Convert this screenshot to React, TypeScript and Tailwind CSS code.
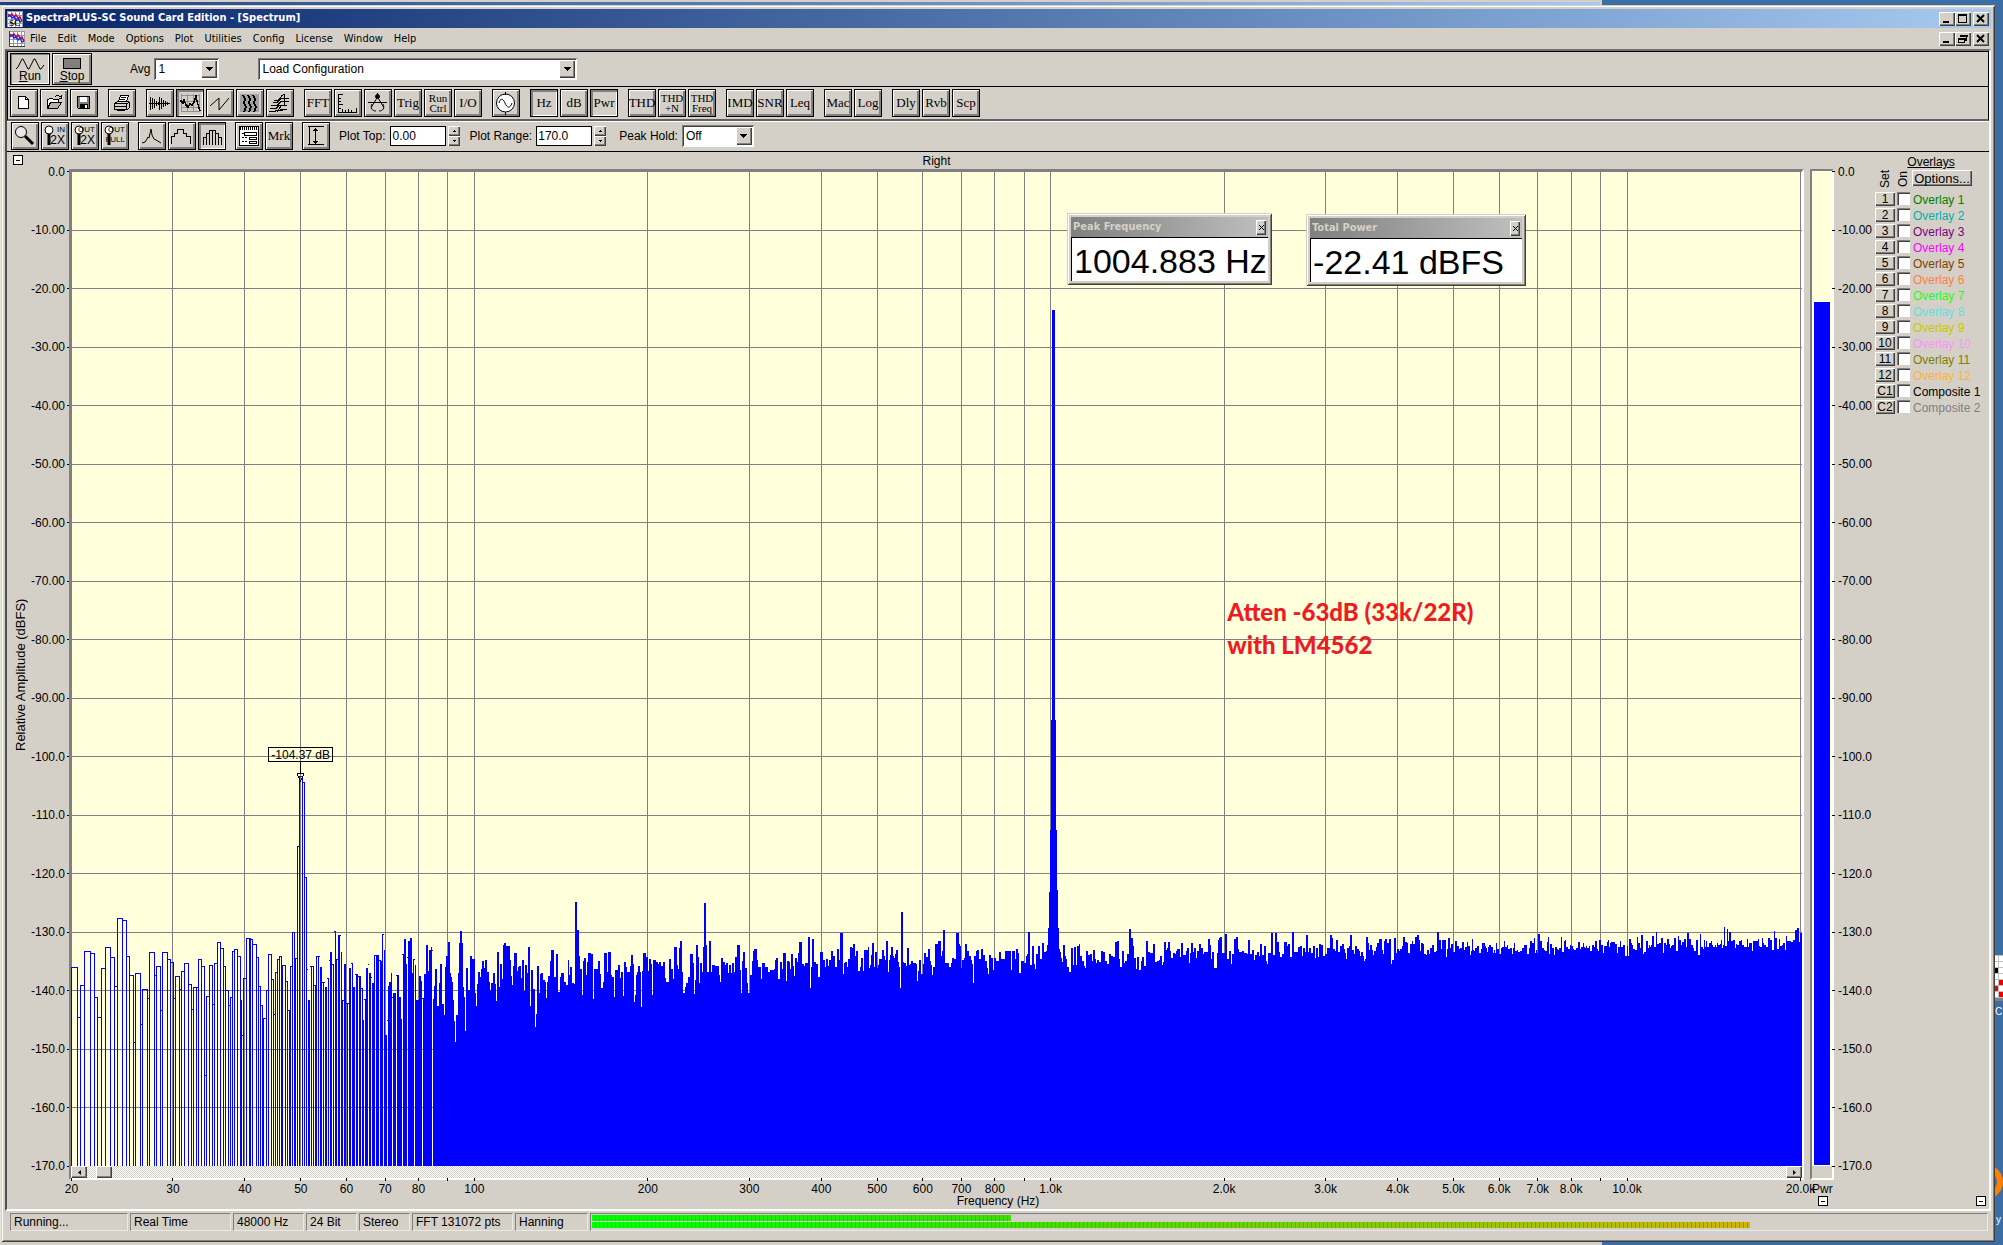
import React from "react";

const RAISED =
  "bg-[#d4d0c8] shadow-[inset_1px_1px_#ffffff,inset_-1px_-1px_#404040,inset_-2px_-2px_#808080]";
const SUNKEN =
  "shadow-[inset_1px_1px_#808080,inset_-1px_-1px_#ffffff,inset_2px_2px_#404040]";
const TAHOMA = "font-['Tahoma','DejaVu_Sans_Condensed','DejaVu_Sans',sans-serif]";

/* ---------- spectrum data ---------- */

const PLOT_W = 1731;
const PLOT_H = 995;
const DECADE = 576.34;
const BIN_HZ = 48000 / 131072;
const xOf = (hz: number) => 0.5 + DECADE * Math.log10(hz / 20);

// Step traces: pairs of (start, level) on a fine raster.
const LOW = [
  214,712,230,862,241,766,253,664,269,670,281,802,292,862,304,715,316,652,330,682,341,769,352,565,365,571,377,679,387,736,398,937,406,730,419,883,427,778,440,805,448,667,461,736,469,709,479,841,487,667,500,688,509,697,518,805,526,739,536,778,544,724,553,700,563,763,572,838,578,772,587,772,595,688,604,709,611,1036,619,799,628,706,635,823,643,700,652,637,659,655,668,709,674,781,683,826,689,802,697,664,703,658,710,679,719,811,724,916,730,745,739,625,746,625,751,628,757,643,767,682,773,769,779,826,785,886,790,865,799,781,805,673,812,748,818,853,824,727,830,688,836,679,842,724,847,706,854,754,860,841,866,931,871,709,877,607,881,769,886,685,892,349,898,139,905,157,911,442,919,718,925,811,931,709,941,766,947,679,953,679,960,712,967,757,974,772,982,745,988,691,991,667,997,703,1003,604,1009,688,1015,616,1023,667,1026,811,1032,703,1038,820,1047,715,1054,700,1060,772,1066,733,1074,739,1082,775,1088,871,1093,808,1098,715,1103,703,1108,730,1113,742,1117,760,1123,676,1129,676,1137,691,1143,694,1147,613,1152,660,1155,915,1160,871,1163,769,1167,757,1172,730,1176,802,1180,790,1189,736,1197,802,1203,868,1207,673,1211,628,1217,703,1222,682,1225,634,1229,625,1235,730,1240,688,1245,706,1249,811,1258,739,1262,754,1266,805,1273,733,1279,646,1284,724,1288,661,1293,652,1297,661,1300,808,1303,769,1306,718,1310,829,1317,760,1321,703,1325,823,1331,856,1335,712,1339,679,1345,637,
];
const MID = [
  0,222,6,342,11,375,14,231,17,198,22,156,28,249,31,261,34,276,37,330,40,393,43,456,46,375,51,249,54,159,57,123,61,159,64,291,67,321,70,423,73,234,78,300,84,198,90,207,98,309,101,348,104,282,107,246,112,261,115,237,118,213,123,234,126,210,132,246,137,276,140,300,143,279,148,249,154,282,157,333,160,186,165,291,168,222,174,267,177,165,180,159,185,168,196,210,199,258,202,285,205,228,208,189,215,243,218,231,221,228,227,264,230,210,235,303,238,225,244,249,247,171,252,348,255,240,260,297,266,411,269,372,272,228,277,309,280,252,283,249,289,270,294,276,297,324,300,276,303,258,308,213,311,180,318,261,325,192,330,306,336,261,339,249,347,276,354,285,357,210,361,255,364,231,370,279,375,282,378,36,384,120,389,198,392,237,398,315,401,213,404,204,409,255,412,216,415,189,422,192,428,327,431,237,441,213,448,252,451,294,455,276,460,189,468,246,471,186,479,255,482,261,487,321,490,240,497,225,504,264,507,246,512,318,515,216,521,231,524,246,532,228,536,195,540,222,543,336,546,315,549,255,552,246,555,228,560,246,563,351,566,243,569,189,577,201,582,243,585,207,591,222,594,315,597,210,605,216,611,222,614,216,620,228,625,216,630,264,633,276,641,207,647,237,652,267,655,171,664,225,667,237,670,174,673,153,678,246,681,309,687,291,690,279,695,261,701,192,708,219,711,312,714,270,717,165,722,201,725,279,728,219,734,246,737,171,740,39,745,165,748,246,753,153,759,246,762,225,770,228,781,255,784,276,787,204,793,216,798,225,801,219,806,249,809,225,815,249,818,219,823,246,826,201,832,165,840,240,843,309,846,213,849,186,854,234,859,279,862,309,868,255,874,213,877,183,880,177,888,210,891,231,899,267,902,219,910,231,918,246,924,240,936,237,939,210,942,204,947,267,953,216,958,237,961,189,969,273,972,213,978,216,981,237,984,192,988,228,991,258,994,204,1000,216,1003,189,1006,156,1014,222,1020,228,1023,219,1030,141,1036,294,1039,231,1042,147,1047,216,1053,222,1058,261,1064,186,1072,210,1078,231,1081,207,1087,228,1090,210,1096,183,1101,198,1106,231,1112,177,1117,210,1120,129,1128,252,1131,219,1134,216,1140,231,1143,207,1149,171,1154,174,1157,162,1162,198,1165,183,1170,243,1176,231,1179,204,1184,243,1187,180,1197,171,1201,234,1204,225,1207,195,1210,159,1215,231,1218,186,1223,234,1226,225,1229,207,1238,180,1243,198,1246,210,1249,153,1254,246,1257,210,1260,195,1263,171,1268,198,1271,204,1275,192,1278,180,1281,216,1285,231,1288,294,1291,66,1296,216,1300,219,1305,228,1308,174,1313,225,1316,222,1320,213,1325,219,1334,222,1336,273,1339,243,1342,210,1347,252,1353,222,1356,189,1361,201,1367,177,1372,213,1375,225,1378,255,1381,231,1387,162,1394,153,1402,198,1405,183,1408,120,1413,219,1424,231,1431,219,1434,204,1438,207,1445,129,1453,162,1455,168,
];
const HIGH = [
  0,198,3,264,6,240,12,234,15,192,21,213,27,228,33,240,36,252,39,309,42,228,48,213,51,210,57,237,63,207,69,225,75,243,81,264,84,282,87,225,93,234,99,270,102,234,108,243,117,216,123,237,135,213,153,270,156,213,165,237,168,207,174,219,177,279,183,243,192,249,198,228,201,222,204,156,210,255,216,198,222,252,225,267,228,222,234,198,240,237,246,189,252,216,258,213,261,195,264,144,267,36,270,-150,273,-480,276,-1710,285,-480,288,-150,291,30,294,144,297,207,300,216,303,234,306,246,309,195,315,228,318,237,321,261,327,276,333,204,339,255,342,201,348,255,351,198,357,192,360,228,366,243,372,258,375,264,378,213,384,225,390,222,396,243,399,210,405,237,408,249,411,240,417,246,423,213,429,216,435,243,441,252,447,222,453,228,459,231,465,186,471,183,477,237,480,261,486,213,492,249,495,243,501,222,507,147,513,174,519,198,522,234,528,267,531,231,537,270,543,243,546,231,552,258,558,183,564,216,570,219,579,192,585,246,591,243,597,240,600,228,606,255,609,246,612,186,618,210,621,204,624,186,630,213,633,234,639,219,645,222,648,213,651,207,660,231,663,189,669,225,678,213,681,204,687,249,690,219,693,189,699,216,702,204,708,234,711,213,717,192,723,204,729,222,732,216,744,177,750,195,753,237,756,216,762,264,771,219,774,180,777,174,780,171,786,219,795,162,801,237,807,213,813,252,816,222,822,177,828,171,834,207,837,216,846,213,852,219,861,222,864,180,870,222,876,210,882,240,885,225,891,216,897,228,900,192,906,225,912,198,918,243,921,252,924,219,933,159,939,225,945,159,951,186,957,216,960,231,966,222,972,186,981,198,984,192,990,231,996,156,1002,216,1014,201,1020,198,1026,228,1029,204,1035,216,1038,165,1044,216,1047,204,1053,219,1059,198,1065,234,1068,204,1074,231,1077,192,1083,195,1089,228,1095,222,1101,204,1110,165,1116,174,1119,207,1125,213,1128,180,1134,216,1140,198,1146,192,1152,207,1155,219,1158,237,1161,204,1167,198,1170,165,1176,210,1182,222,1185,198,1191,207,1197,213,1200,228,1203,216,1209,228,1212,243,1215,237,1218,171,1224,189,1227,210,1230,195,1236,210,1239,225,1242,213,1248,201,1251,189,1257,177,1266,210,1269,222,1272,183,1275,177,1281,189,1287,177,1293,252,1296,240,1302,174,1308,219,1311,207,1317,213,1320,207,1326,198,1329,171,1335,186,1341,189,1344,219,1350,192,1356,183,1359,192,1365,171,1371,165,1377,180,1380,213,1383,189,1389,192,1392,222,1398,225,1401,210,1407,222,1410,204,1416,195,1422,216,1428,213,1431,156,1437,180,1443,207,1446,180,1458,231,1461,207,1464,174,1470,204,1473,192,1479,216,1485,183,1491,198,1497,207,
];

const OUTLINE_END = 235;

function buildSpectrum() {
  const top: number[] = new Array(PLOT_W).fill(780);
  const fill = (d: number[], scale: number, ox: number, oy: number, end: number) => {
    for (let i = 0; i < d.length; i += 2) {
      const a = Math.round(d[i] / scale) + ox;
      const b = i + 2 < d.length ? Math.round(d[i + 2] / scale) + ox : end;
      for (let x = Math.max(0, a); x < b; x++) top[x] = Math.round(d[i + 1] / 3) + oy;
    }
  };
  fill(LOW, 3, -71, 559, 378);
  fill(MID, 2.8, 369, 719, 889);
  fill(HIGH, 3, 889, 709, 1389);
  let seed = 4562;
  const rnd = () => {
    seed = (seed * 1103515245 + 12345) % 2147483648;
    return seed / 2147483648;
  };
  let x = 1389;
  while (x < PLOT_W) {
    const base = 778 - (7 * (x - 1389)) / 341;
    const spike = rnd();
    const y = base + (rnd() + rnd() - 1) * 10 - (spike > 0.91 ? 8 : 0) + (spike < 0.05 ? 6 : 0);
    const w = rnd() > 0.5 ? 2 : 1;
    for (let k = 0; k < w && x < PLOT_W; k++, x++) top[x] = Math.round(y);
  }

  let outline = "";
  for (let i = 0; i + 2 < LOW.length; i += 2) {
    const a = Math.round(LOW[i] / 3) - 71;
    const b = Math.round(LOW[i + 2] / 3) - 71;
    if (b > OUTLINE_END) break;
    const y = Math.round(LOW[i + 1] / 3) + 559;
    outline += `M${a + 0.5} ${PLOT_H}V${y + 0.5}H${b + 0.5}V${PLOT_H}`;
  }

  const edges = new Set<number>();
  for (let k = 50; k < 260; k++) edges.add(Math.round(xOf((k + 0.5) * BIN_HZ) - 0.5));
  let solid = "";
  for (let c = OUTLINE_END; c < PLOT_W; c++) {
    const filled = c > 368 || edges.has(c);
    solid += filled ? `M${c} ${PLOT_H}V${top[c]}h1V${PLOT_H}z` : `M${c} ${top[c]}h1v1h-1z`;
  }
  return { outline, solid };
}

const SPECTRUM = buildSpectrum();
const DB_LABELS = Array.from({ length: 18 }, (_, i) =>
  i === 0 ? "0.0" : i < 10 ? `-${i * 10}.00` : `-${i * 10}.0`
);
const GRID_HZ = [
  20, 30, 40, 50, 60, 70, 80, 90, 100, 200, 300, 400, 500, 600, 700, 800, 900, 1000, 2000, 3000,
  4000, 5000, 6000, 7000, 8000, 9000, 10000, 20000,
];
const hzLabel = (f: number) =>
  String(f)[0] === "9" ? "" : f >= 1000 ? `${(f / 1000).toFixed(1)}k` : String(f);

/* ---------- small parts ---------- */

function ToolButton({
  label,
  pressed,
  children,
}: {
  label: string;
  pressed?: boolean;
  children: React.ReactNode;
}) {
  return (
    <button
      aria-label={label}
      aria-pressed={!!pressed}
      className={`flex h-7 w-7 shrink-0 items-center justify-center overflow-hidden border border-black bg-[#d4d0c8] ${
        pressed
          ? "shadow-[inset_2px_2px_#808080,inset_-1px_-1px_#ffffff]"
          : "shadow-[inset_1px_1px_#ffffff,inset_-2px_-2px_#808080]"
      }`}
    >
      {children}
    </button>
  );
}

function Glyph({ children, smooth }: { children: React.ReactNode; smooth?: boolean }) {
  return (
    <svg
      viewBox="0 0 28 28"
      className="h-7 w-7 shrink-0"
      fill="none"
      stroke="#000"
      shapeRendering={smooth ? "auto" : "crispEdges"}
      aria-hidden="true"
    >
      {children}
    </svg>
  );
}

function TextTool({ text, pressed }: { text: string; pressed?: boolean }) {
  const lines = text.split("|");
  return (
    <ToolButton label={lines.join(" ")} pressed={pressed}>
      <span
        className={`flex flex-col items-center font-['Liberation_Serif',serif] whitespace-nowrap ${
          lines.length > 1 ? "text-[11px] leading-[10px]" : "text-[13px] leading-[14px]"
        }`}
      >
        {lines.map((l) => (
          <span key={l}>{l}</span>
        ))}
      </span>
    </ToolButton>
  );
}

function ZoomTool({ top, bottom }: { top: string; bottom: string }) {
  return (
    <ToolButton label={`Zoom ${top} ${bottom}`}>
      <span className="relative block h-7 w-7">
        <Glyph smooth>
          <circle cx="8" cy="8" r="4" fill="#fff" />
          <path d="M8 12v11" strokeWidth="3" />
        </Glyph>
        <span className="absolute top-1 right-1 font-['Liberation_Sans',sans-serif] text-[8px] leading-[8px]">
          {top}
        </span>
        <span
          className={`absolute right-1 bottom-1 font-['Liberation_Sans',sans-serif] ${
            bottom === "2X" ? "text-[12px] leading-[12px]" : "text-[8px] leading-[12px]"
          }`}
        >
          {bottom}
        </span>
      </span>
    </ToolButton>
  );
}

function Combo({ label, value, className }: { label: string; value: string; className: string }) {
  return (
    <span className={`relative flex h-[22px] shrink-0 bg-white p-0.5 ${SUNKEN} ${className}`}>
      <select
        aria-label={label}
        className="w-full appearance-none bg-transparent pl-0.5 text-xs outline-none"
      >
        <option>{value}</option>
      </select>
      <span
        className={`pointer-events-none absolute top-0.5 right-0.5 bottom-0.5 flex w-4 items-center justify-center ${RAISED}`}
      >
        <svg viewBox="0 0 7 4" className="h-1 w-[7px]" shapeRendering="crispEdges">
          <path d="M0 0h7v1h-7zM1 1h5v1h-5zM2 2h3v1h-3zM3 3h1v1h-1z" />
        </svg>
      </span>
    </span>
  );
}

function Spin({ label, value }: { label: string; value: string }) {
  return (
    <span className="flex shrink-0 items-center gap-0.5">
      <input
        aria-label={label}
        defaultValue={value}
        className="h-5 w-14 border border-black bg-white pl-px text-xs outline-none"
      />
      <span className="flex flex-col">
        {["up", "down"].map((d) => (
          <button
            key={d}
            aria-label={`${label} ${d}`}
            className={`flex h-2.5 w-3 items-center justify-center ${RAISED}`}
          >
            <svg viewBox="0 0 3 2" className="h-0.5 w-[3px]" shapeRendering="crispEdges">
              <path d={d === "up" ? "M1 0h1v1h1v1h-3v-1h1z" : "M0 0h3v1h-1v1h-1v-1h-1z"} />
            </svg>
          </button>
        ))}
      </span>
    </span>
  );
}

function CollapseBox({ label }: { label: string }) {
  return (
    <button
      aria-label={label}
      className="flex h-2.5 w-2.5 shrink-0 items-center justify-center border border-black bg-white"
    >
      <span className="block h-px w-1 bg-black" />
    </button>
  );
}

function AppIcon({ sc }: { sc?: boolean }) {
  return (
    <svg viewBox="0 0 16 16" className="h-4 w-4 shrink-0" fill="none" aria-hidden="true">
      <rect width="16" height="16" fill="#fff" />
      <path
        d="M0 .5h16M0 4.5h16M0 8.5h16M0 12.5h16M.5 0v16M4.5 0v16M8.5 0v16M12.5 0v16M15.5 0v16"
        stroke="#9a9a9a"
        shapeRendering="crispEdges"
      />
      <path d="M1 3l2 2 2-2 2 3 2-2 2 3 2-1 2 4" stroke="#e00020" strokeWidth="1.5" />
      <path d="M1 6l2-2 2 3 2-1 2 3 2-2 2 4 2-1" stroke="#1030ff" strokeWidth="1.5" />
      {sc && (
        <text x="2" y="15" fontSize="9" fontWeight="bold" fill="#000" fontFamily="Liberation Serif">
          SC
        </text>
      )}
      {!sc && <path d="M.5 0v15.500h15.500" stroke="#404040" />}
    </svg>
  );
}

function CaptionButtons({ restore }: { restore?: boolean }) {
  const cls = `flex h-3.5 w-4 items-center justify-center ${RAISED}`;
  return (
    <span className="ml-auto flex pr-0.5">
      <button aria-label="Minimize" className={cls}>
        <svg viewBox="0 0 16 14" className="h-3.5 w-4" shapeRendering="crispEdges">
          <path d="M4 9h6v2h-6z" />
        </svg>
      </button>
      <button aria-label={restore ? "Restore" : "Maximize"} className={cls}>
        <svg viewBox="0 0 16 14" className="h-3.5 w-4" shapeRendering="crispEdges" fill="none" stroke="#000">
          {restore ? (
            <path d="M5.500 5V3.500h6v5h-2M5 3h7v1h-7M3.500 6.500h6v4h-6zM3 6h7v1h-7" />
          ) : (
            <path d="M3.500 2.500h8v8h-8zM3 3.500h9" />
          )}
        </svg>
      </button>
      <button aria-label="Close" className={`ml-0.5 ${cls}`}>
        <svg viewBox="0 0 16 14" className="h-3.5 w-4" stroke="#000" strokeWidth="2">
          <path d="M4 3l7 7M11 3l-7 7" />
        </svg>
      </button>
    </span>
  );
}

/* ---------- toolbars ---------- */

function ControlBar() {
  return (
    <div className="flex h-9 shrink-0 items-start border border-black pt-px pl-0.5">
      <button
        className="flex h-8 w-10 flex-col items-center border border-black pt-1 text-xs leading-[13px] shadow-[inset_1px_1px_#808080,inset_-1px_-1px_#ffffff]"
        aria-pressed="true"
      >
        <svg viewBox="0 0 30 12" className="h-3 w-[30px] shrink-0" fill="none" stroke="#000" aria-hidden="true">
          <path d="M1 11l2-2 4-8h1l5 10h1l5-10h1l5 10h1l3-4" />
        </svg>
        <span>
          <u>R</u>un
        </span>
      </button>
      <button className="ml-0.5 flex h-8 w-10 flex-col items-center border border-black pt-1 text-xs leading-[13px] shadow-[inset_1px_1px_#ffffff,inset_-2px_-2px_#808080]">
        <span className="mb-px block h-[11px] w-[18px] shrink-0 border border-black bg-[#808080]" />
        <span>
          <u>S</u>top
        </span>
      </button>
      <span className="mt-[5px] ml-[38px] flex items-center text-xs">
        <span className="mr-1">Avg</span>
        <Combo label="Avg" value="1" className="w-[65px]" />
        <Combo label="Configuration" value="Load Configuration" className="ml-[39px] w-[319px]" />
      </span>
    </div>
  );
}

function MainToolbar() {
  return (
    <div className="flex h-[34px] shrink-0 items-start gap-2.5 border-x border-b-2 border-x-black border-b-[#606060] pt-0.5 pl-0.5">
      <div className="flex gap-0.5">
        <ToolButton label="New">
          <Glyph>
            <path d="M8.500 7.500h7l3 3v9h-10z" fill="#fff" />
            <path d="M15.500 7.500v3h3" />
          </Glyph>
        </ToolButton>
        <ToolButton label="Open">
          <Glyph>
            <path d="M7.500 19.500v-9h1l1-1h3l1 1h5v3" fill="#fff" />
            <path d="M7.500 19.500l3-6h11l-4 6z" fill="#b8b4ac" />
            <path d="M15 7.500h1M16 6.500h3M19 7.500h2M21.500 6v3M19 9.500h3" />
          </Glyph>
        </ToolButton>
        <ToolButton label="Save">
          <Glyph>
            <path d="M7.500 7.500h12v12h-11l-1-1z" fill="#808080" />
            <path d="M10 8h7v5h-7z" fill="#fff" stroke="none" />
            <path d="M10 15h8v5h-8z" fill="#000" stroke="none" />
            <path d="M15 16h2v3h-2z" fill="#fff" stroke="none" />
          </Glyph>
        </ToolButton>
      </div>
      <ToolButton label="Print">
        <Glyph>
          <path d="M10.500 12.500l2-6h8l-2 6" fill="#fff" />
          <path d="M13 8.500h5M12 10.500h5" />
          <path d="M6.500 14.500l3-2h10l2 1v5l-2 2h-13z" fill="#d4d0c8" />
          <path d="M6.500 14.500h12v6M6.500 17.500h12M18.500 14.500l3-1M9 20.500v1h8" />
        </Glyph>
      </ToolButton>
      <div className="flex gap-0.5">
        <ToolButton label="Time series">
          <Glyph>
            <path d="M3 14.500h21M4.500 8v13M6.500 9v11M8.500 10v9M10.500 12v5M12.500 13v3M13.500 8v13M15.500 9v11M17.500 11v7M19.500 12v5M21.500 13v3" />
          </Glyph>
        </ToolButton>
        <ToolButton label="Spectrum" pressed>
          <Glyph>
            <path d="M5.500 5v18M11.500 5v18M17.500 5v18M23.500 5v18M5 6.500h19M5 12.500h19M5 18.500h19M5 22.500h19" stroke="#909090" />
            <path d="M5 11v1l2 2 1-3 2 5 2 2 2-3 2 1 2-3 2-6 1 5 2 7 1 3" strokeWidth="1.500" />
          </Glyph>
        </ToolButton>
        <ToolButton label="Phase">
          <Glyph smooth>
            <path d="M4 17l9-8v12l10-12" />
          </Glyph>
        </ToolButton>
        <ToolButton label="Spectrogram">
          <Glyph>
            <path d="M4 5h19v18h-19z" fill="#a0a0a0" stroke="none" />
            <path d="M7 6l2 4-1 4 2 4-2 5M12 6l2 4-1 4 2 4-2 5M17 6l2 4-1 4 2 4-2 5" strokeWidth="2" />
          </Glyph>
        </ToolButton>
        <ToolButton label="3-D surface">
          <Glyph>
            <path d="M3 22.500h5l3-1h6M4 19.500h6l3-3h8M5 16.500h6l4-4h8M7 13.500h4l4-4h8M8 11.500h4l4-5 2-1v3M11 23l4-6M14 20.500h7M18 9v8" />
          </Glyph>
        </ToolButton>
      </div>
      <div className="flex gap-0.5">
        <TextTool text="FFT" />
        <ToolButton label="Scaling">
          <Glyph>
            <path d="M4.500 5v18h18M5 5.500h4M5 9.500h2M5 12.500h2M5 15.500h4M5 19.500h2M8.500 20v3M11.500 21v2M14.500 20v3M17.500 21v2M22.500 19v4" />
          </Glyph>
        </ToolButton>
        <ToolButton label="Calibration">
          <Glyph smooth>
            <path d="M13.500 4v4M13.500 8l-6 10M13.500 8l6 10M4 13.500h19" />
            <path d="M8 15c-2 4 0 7 4 7M19 15c2 4 0 7-4 7" />
            <circle cx="13.500" cy="7.500" r="2" fill="#000" />
          </Glyph>
        </ToolButton>
        <TextTool text="Trig" />
        <TextTool text="Run|Ctrl" />
        <TextTool text="I/O" />
      </div>
      <ToolButton label="Signal generator">
        <Glyph smooth>
          <circle cx="13.500" cy="14" r="9" fill="#fff" />
          <path d="M13.500 3v3M13.500 23v3" />
          <path d="M7 14c1-5 4-5 6 0s5 6 7 0" />
        </Glyph>
      </ToolButton>
      <div className="flex gap-0.5">
        <TextTool text="Hz" pressed />
        <TextTool text="dB" />
        <TextTool text="Pwr" pressed />
      </div>
      <div className="flex gap-0.5">
        <TextTool text="THD" />
        <TextTool text="THD|+N" />
        <TextTool text="THD|Freq" />
      </div>
      <div className="flex gap-0.5">
        <TextTool text="IMD" />
        <TextTool text="SNR" />
        <TextTool text="Leq" />
      </div>
      <div className="flex gap-0.5">
        <TextTool text="Mac" />
        <TextTool text="Log" />
      </div>
      <div className="flex gap-0.5">
        <TextTool text="Dly" />
        <TextTool text="Rvb" />
        <TextTool text="Scp" />
      </div>
    </div>
  );
}

function PlotToolbar() {
  return (
    <div className="flex h-[31px] shrink-0 items-start border-t border-b border-t-white border-b-black pl-1 text-xs">
      <div className="flex gap-[9px]">
        <div className="flex gap-0.5">
          <ToolButton label="Zoom">
            <Glyph smooth>
              <circle cx="10" cy="10" r="5.500" fill="#e8e8e8" />
              <path d="M14 14l8 8" strokeWidth="3" />
            </Glyph>
          </ToolButton>
          <ZoomTool top="IN" bottom="2X" />
          <ZoomTool top="OUT" bottom="2X" />
          <ZoomTool top="OUT" bottom="FULL" />
        </div>
        <div className="flex gap-0.5">
          <ToolButton label="Line plot">
            <Glyph smooth>
              <path d="M4 21l3-1 2-3 1-2 1 1 2-9 1 6 2 4 2 1 5 3" />
            </Glyph>
          </ToolButton>
          <ToolButton label="Step plot">
            <Glyph>
              <path d="M3.500 22v-8h3v-3h3v-4h6v4h3v3h4v8" />
            </Glyph>
          </ToolButton>
          <ToolButton label="Bar plot" pressed>
            <Glyph>
              <path d="M5.500 23v-8h3v8M8.500 15v-4h3v12M11.500 11v-3h6v15M14.500 8v15M17.500 11h3v12M20.500 15h3v8" />
            </Glyph>
          </ToolButton>
        </div>
        <div className="flex gap-0.5">
          <ToolButton label="Plot options">
            <Glyph>
              <path d="M4.500 4.500h19v19h-19z" fill="#fff" />
              <path d="M5 6.500h18" strokeWidth="3" strokeDasharray="1 1" />
              <path d="M7 11.500h6M7 15.500h6M7 19.500h6" strokeDasharray="2 1" />
              <path d="M9 10.500h12v3h-12zM14 15.500h7v2h-7zM14 19.500h7v2h-7z" fill="#fff" />
            </Glyph>
          </ToolButton>
          <TextTool text="Mrk" />
        </div>
        <ToolButton label="Autoscale">
          <Glyph>
            <path d="M6 4.500h16M6 22.500h16M13.500 6v16M11 8.500h5M12 7.500h3M11 19.500h5M12 20.500h3M7.500 5v17" />
          </Glyph>
        </ToolButton>
      </div>
      <div className="mt-1 ml-[9px] flex h-5 items-center">
        <span className="mr-[5px]">Plot Top:</span>
        <Spin label="Plot Top" value="0.00" />
        <span className="mr-1 ml-[9px]">Plot Range:</span>
        <Spin label="Plot Range" value="170.0" />
        <span className="mr-1 ml-[13px]">Peak Hold:</span>
        <Combo label="Peak Hold" value="Off" className="w-[72px]" />
      </div>
    </div>
  );
}

/* ---------- plot ---------- */

function Readout({ title, value, className }: { title: string; value: string; className: string }) {
  return (
    <section
      className={`absolute h-[72px] bg-[#d4d0c8] p-1 shadow-[inset_1px_1px_#d4d0c8,inset_-1px_-1px_#404040,inset_2px_2px_#ffffff,inset_-2px_-2px_#808080] ${className}`}
    >
      <header className="flex h-5 items-center bg-linear-to-r from-[#808080] to-[#c0c0c0] px-0.5">
        <h2 className={`text-[11px] font-bold text-[#d4d0c8] ${TAHOMA}`}>{title}</h2>
        <button
          aria-label={`Close ${title}`}
          className={`ml-auto flex h-[15px] w-2.5 items-center justify-center ${RAISED}`}
        >
          <svg viewBox="0 0 5 5" className="h-[5px] w-[5px]" stroke="#000">
            <path d="M0 0l5 5M5 0l-5 5" />
          </svg>
        </button>
      </header>
      <div className="h-11 overflow-hidden border-t border-l border-black bg-white pl-0.5 text-[34px] leading-[46px] whitespace-nowrap">
        {value}
      </div>
    </section>
  );
}

function Plot() {
  return (
    <div className="relative flex flex-1 flex-col border-2 border-t-[#808080] border-r-white border-b-white border-l-[#808080]">
      <div className="relative flex-1 bg-[#ffffdc]">
        <svg
          viewBox={`0 0 ${PLOT_W} ${PLOT_H}`}
          preserveAspectRatio="none"
          className="absolute inset-0 h-full w-full"
          shapeRendering="crispEdges"
          role="img"
          aria-label="Right channel spectrum"
        >
          {DB_LABELS.slice(0, 17).map((l, i) => (
            <rect key={l} x="0" y={Math.round(i * 58.5)} width={PLOT_W} height="1" fill="#808080" />
          ))}
          {GRID_HZ.map((f) => (
            <rect key={f} x={Math.round(xOf(f) - 0.5)} y="0" width="1" height={PLOT_H} fill="#808080" />
          ))}
          <path d={SPECTRUM.outline} fill="none" stroke="#0000ff" />
          <path d={SPECTRUM.solid} fill="#0000ff" />
          <path d="M229.500 591v11M226 602.500h7M226.500 602v2l3 6 3-6v-2" fill="none" stroke="#000" />
        </svg>
        <span className="absolute top-[57.9%] left-[11.4%] flex h-[15px] items-center border border-black px-0.5 text-xs leading-3 whitespace-nowrap">
          -104.37 dB
        </span>
        <Readout title="Peak Frequency" value="1004.883 Hz" className="top-[42px] left-[57.54%] w-[205px]" />
        <Readout title="Total Power" value="-22.41 dBFS" className="top-[43px] left-[71.35%] w-[220px]" />
        <p className="absolute top-[42.6%] left-[66.8%] font-['Lato','Noto_Sans',sans-serif] text-2xl leading-[33px] font-black whitespace-nowrap text-[#ed1c24]">
          Atten -63dB (33k/22R)
          <br />
          with LM4562
        </p>
      </div>
      <div className="flex h-3 bg-[repeating-conic-gradient(#d4d0c8_0_25%,#ffffff_0_50%)] bg-[length:2px_2px]">
        <button aria-label="Scroll left" className={`flex w-4 items-center justify-center ${RAISED}`}>
          <svg viewBox="0 0 3 5" className="h-[5px] w-[3px]">
            <path d="M3 0v5L0 2.500z" />
          </svg>
        </button>
        <div className={`ml-[9px] w-4 ${RAISED}`} />
        <button aria-label="Scroll right" className={`ml-auto flex w-4 items-center justify-center ${RAISED}`}>
          <svg viewBox="0 0 3 5" className="h-[5px] w-[3px]">
            <path d="M0 0v5L3 2.500z" />
          </svg>
        </button>
      </div>
    </div>
  );
}

function FrequencyAxis() {
  return (
    <div className="relative mx-0.5 h-[15px] text-xs leading-3">
      {GRID_HZ.map((f) => (
        <span
          key={f}
          className="absolute -top-0.5 flex w-10 -translate-x-1/2 flex-col items-center"
          style={{ left: `${(xOf(f) / PLOT_W) * 100}%` }}
        >
          <span className="mb-0.5 h-[3px] w-px bg-black" />
          {hzLabel(f)}
        </span>
      ))}
    </div>
  );
}

function LevelMeter() {
  return (
    <div className="flex">
      <div className="flex w-6 flex-col">
        <div className="h-[17px]" />
        <div className="flex flex-1 flex-col border-2 border-t-[#808080] border-r-white border-b-white border-l-[#808080]">
          <div className="flex flex-1 flex-col bg-[#ffffdc] px-0.5 pb-px">
            <div className="h-[13.2%]" />
            <div className="flex-1 bg-[#0000ff]" />
          </div>
          <div className="h-3" />
        </div>
        <div className="h-[15px] pt-[3px] pl-0.5 text-xs leading-3">Pwr</div>
      </div>
      <div className="-ml-0.5 flex w-[43px] flex-col justify-between pt-[19px] pb-7 text-xs">
        {DB_LABELS.map((l) => (
          <span key={l} className="flex h-px items-center">
            <span className="mr-[3px] h-px w-[3px] bg-black" />
            {l}
          </span>
        ))}
      </div>
    </div>
  );
}

const OVERLAYS: [string, string, string][] = [
  ["1", "Overlay 1", "text-[#008000]"],
  ["2", "Overlay 2", "text-[#00b0b0]"],
  ["3", "Overlay 3", "text-[#800080]"],
  ["4", "Overlay 4", "text-[#ff00ff]"],
  ["5", "Overlay 5", "text-[#804000]"],
  ["6", "Overlay 6", "text-[#ff8040]"],
  ["7", "Overlay 7", "text-[#20ff20]"],
  ["8", "Overlay 8", "text-[#60e0e0]"],
  ["9", "Overlay 9", "text-[#c8c800]"],
  ["10", "Overlay 10", "text-[#ff90ff]"],
  ["11", "Overlay 11", "text-[#808000]"],
  ["12", "Overlay 12", "text-[#ffb040]"],
  ["C1", "Composite 1", "text-black"],
  ["C2", "Composite 2", "text-[#808080]"],
];

function OverlayPanel() {
  return (
    <aside className="w-[114px] shrink-0 text-xs">
      <h2 className="pt-[3px] pr-0.5 text-center leading-[15px] underline">Overlays</h2>
      <div className="flex h-[22px] items-start">
        <span className="flex h-[18px] w-5 rotate-180 items-center justify-center leading-3 [writing-mode:vertical-rl]">
          Set
        </span>
        <span className="mr-[3px] ml-0.5 flex h-[18px] w-3 rotate-180 items-center justify-center leading-3 [writing-mode:vertical-rl]">
          On
        </span>
        <button className={`h-4 w-[60px] text-[13px] leading-[15px] ${RAISED}`}>Options...</button>
      </div>
      {OVERLAYS.map(([id, name, color]) => (
        <div key={id} className="flex h-4 items-start">
          <button aria-label={`Set ${name}`} className={`h-3.5 w-5 leading-[14px] ${RAISED}`}>
            {id}
          </button>
          <input
            id={`overlay-${id}`}
            type="checkbox"
            className="ml-0.5 h-[13px] w-[13px] shrink-0 appearance-none bg-white shadow-[inset_1px_1px_#808080,inset_2px_2px_#404040,inset_-1px_-1px_#ffffff]"
          />
          <label htmlFor={`overlay-${id}`} className={`ml-[3px] leading-4 whitespace-nowrap ${color}`}>
            {name}
          </label>
        </div>
      ))}
    </aside>
  );
}

/* ---------- status bar ---------- */

const STATUS: [string, string][] = [
  ["Running...", "w-[118px]"],
  ["Real Time", "w-[101px]"],
  ["48000 Hz", "w-[71px]"],
  ["24 Bit", "w-[51px]"],
  ["Stereo", "w-[51px]"],
  ["FFT 131072 pts", "w-[101px]"],
  ["Hanning", "w-[73px]"],
];

function VuBar({ percent }: { percent: number }) {
  return (
    <div className="h-1.5 overflow-hidden" style={{ width: `${percent}%` }}>
      <div className="h-full" style={{ width: `${(83 / percent) * 100}%` }}>
        <div className="h-full bg-[repeating-linear-gradient(90deg,transparent_0_3px,#808080_3px_4px),linear-gradient(90deg,#00ff00,#40e000_36%,#d0b800)]" />
      </div>
    </div>
  );
}

function StatusBar() {
  const cell =
    "h-[18px] border border-t-[#808080] border-l-[#808080] border-r-[#eceae6] border-b-[#eceae6]";
  return (
    <footer className="flex h-[27px] shrink-0 gap-0.5 pt-0.5 pr-[3px] pl-[5px] text-xs leading-4">
      {STATUS.map(([t, w]) => (
        <span key={t} className={`${cell} ${w} shrink-0 pl-[3px] whitespace-nowrap`}>
          {t}
        </span>
      ))}
      <div className={`${cell} flex flex-1 flex-col gap-px pt-px pl-px`}>
        <VuBar percent={30} />
        <VuBar percent={83} />
      </div>
    </footer>
  );
}

/* ---------- desktop ---------- */

function DesktopEdge() {
  return (
    <div className="relative w-2 shrink-0 overflow-hidden text-[10px] leading-4 text-white">
      <svg viewBox="0 0 8 46" className="absolute top-[950px] left-0 h-[46px] w-2" shapeRendering="crispEdges">
        <path d="M0 0h8v46h-8z" fill="#c0c0c0" />
        <path d="M0 1h3v5h-3zM4 1h4v5h-4zM0 7h3v5h-3zM4 7h4v5h-4zM4 13h4v5h-4zM0 19h3v5h-3zM4 19h4v5h-4zM0 25h3v5h-3zM4 31h4v5h-4zM0 37h3v5h-3z" fill="#fff" />
        <path d="M0 13h3v5h-3z" />
        <path d="M4 25h4v5h-4zM0 31h3v5h-3zM4 37h4v5h-4z" fill="#f00000" />
        <path d="M0 43h8v3h-8z" fill="#808080" />
      </svg>
      <span className="absolute top-[999px] left-0">C</span>
      <span className="absolute top-[1160px] -left-[26px] h-[34px] w-[34px] rounded-full border-[6px] border-[#ff8000]" />
      <span className="absolute top-[1207px] left-px">y</span>
    </div>
  );
}

const MENUS = ["File", "Edit", "Mode", "Options", "Plot", "Utilities", "Config", "License", "Window", "Help"];

export default function App() {
  return (
    <div className="flex h-screen flex-col overflow-hidden bg-[#3a6ea5] font-['Liberation_Sans',Arial,sans-serif] text-black">
      <div className="h-[5px] w-4/5 shrink-0 border-t-2 border-r-2 border-[#d4d0c8] bg-linear-to-r from-[#1d3f85] to-[#a6caf0]" />
      <div className="flex min-h-0 flex-1">
        <div className="w-px shrink-0 bg-[#e8e6d4]" />
        <main className="flex min-w-0 flex-1 flex-col bg-[#d4d0c8] p-1 pb-0 shadow-[inset_1px_1px_#d4d0c8,inset_-1px_-1px_#404040,inset_2px_2px_#ffffff,inset_-2px_-2px_#808080]">
          <header
            className={`flex h-[19px] shrink-0 items-center bg-linear-to-r from-[#0a246a] to-[#a6caf0] pl-0.5 ${TAHOMA}`}
          >
            <AppIcon sc />
            <h1 className="ml-[3px] text-[11px] font-bold whitespace-nowrap text-white">
              SpectraPLUS-SC Sound Card Edition - [Spectrum]
            </h1>
            <CaptionButtons />
          </header>
          <nav className={`flex h-[21px] shrink-0 items-center pl-1 text-[11px] ${TAHOMA}`}>
            <AppIcon />
            <span className="mt-px ml-[5px] flex gap-[11px]">
              {MENUS.map((m) => (
                <button key={m}>{m}</button>
              ))}
            </span>
            <CaptionButtons restore />
          </nav>
          <div className="flex min-h-0 flex-1 flex-col border-2 border-t-[#707070] border-r-white border-b-white border-l-[#505050]">
            <ControlBar />
            <MainToolbar />
            <PlotToolbar />
            <div className="flex min-h-0 flex-1">
              <div className="flex w-[62px] shrink-0 flex-col">
                <div className="h-[17px] pt-[3px] pl-1.5">
                  <CollapseBox label="Collapse plot header" />
                </div>
                <div className="flex flex-1 pt-0.5 pb-7">
                  <span className="mt-3 ml-1 flex w-5 shrink-0 rotate-180 items-center justify-center text-[13px] leading-5 whitespace-nowrap [writing-mode:vertical-rl]">
                    Relative Amplitude (dBFS)
                  </span>
                  <div className="flex min-w-0 flex-1 flex-col justify-between text-xs">
                    {DB_LABELS.map((l) => (
                      <span key={l} className="flex h-px items-center justify-end">
                        <span className="mr-0.5">{l}</span>
                        <span className="h-px w-0.5 shrink-0 bg-black" />
                      </span>
                    ))}
                  </div>
                </div>
              </div>
              <div className="mr-1.5 flex min-w-0 flex-1 flex-col">
                <h2 className="h-[17px] pt-px text-center text-xs leading-4">Right</h2>
                <Plot />
                <FrequencyAxis />
              </div>
              <LevelMeter />
              <OverlayPanel />
            </div>
            <div className="grid h-3.5 shrink-0 grid-cols-[1fr_auto_1fr] text-xs leading-3">
              <span />
              <span>Frequency (Hz)</span>
              <span className="flex justify-end gap-[148px] pt-px pr-[3px]">
                <CollapseBox label="Collapse power meter" />
                <CollapseBox label="Collapse overlays" />
              </span>
            </div>
          </div>
          <StatusBar />
          <div className="h-1 shrink-0" />
        </main>
        <DesktopEdge />
      </div>
      <div className="h-[3px] w-4/5 shrink-0 bg-[#d4d0c8]" />
    </div>
  );
}
